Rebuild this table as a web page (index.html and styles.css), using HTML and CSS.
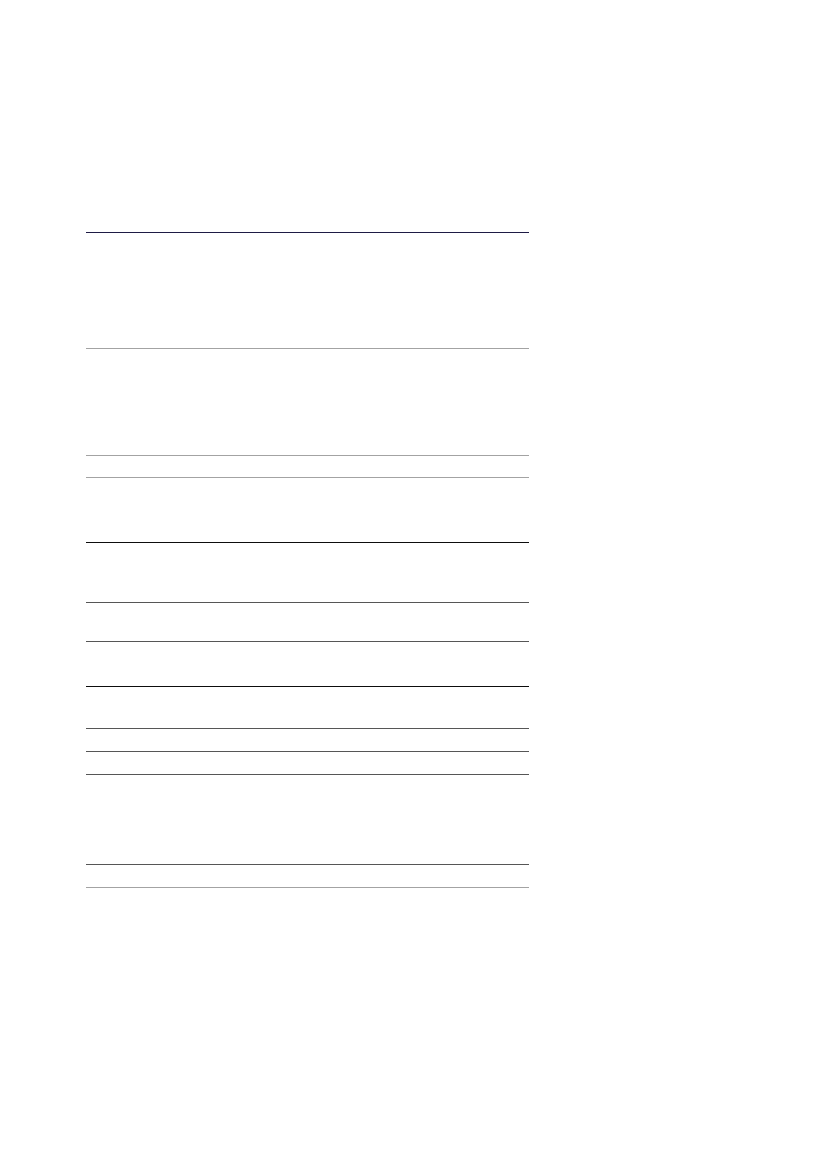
FILE: index.html
```html
<!DOCTYPE html>
<html lang="en">
<head>
<meta charset="utf-8">
<title>Table</title>
<link rel="stylesheet" href="styles.css">
</head>
<body>
<div class="sheet">
  <div class="row h1 light"></div>
  <div class="row h2 light"></div>
  <div class="row h3 light"></div>
  <div class="row h4 black"></div>
  <div class="row h5 dark"></div>
  <div class="row h6 dark"></div>
  <div class="row h7 black"></div>
  <div class="row h8 dark"></div>
  <div class="row h9 dark"></div>
  <div class="row h10 dark"></div>
  <div class="row h11 dark"></div>
  <div class="row h12 light"></div>
</div>
</body>
</html>
```
FILE: styles.css
```css
html, body {
  margin: 0;
  padding: 0;
  background: #ffffff;
  font-family: "Liberation Sans", Arial, sans-serif;
}
.sheet {
  width: 443px;
  margin: 232px 0 0 86px;
  border-top: 1px solid #1e1b45;
}
.row { border-bottom: 1px solid #555555; }
.light { border-bottom-color: #a3a3a3; }
.dark { border-bottom-color: #565656; }
.black { border-bottom-color: #0d0d0d; }
.h1 { height: 115px; }
.h2 { height: 106px; }
.h3 { height: 21px; }
.h4 { height: 64px; }
.h5 { height: 59px; }
.h6 { height: 38px; }
.h7 { height: 44px; }
.h8 { height: 41px; }
.h9 { height: 22px; }
.h10 { height: 22px; }
.h11 { height: 89px; }
.h12 { height: 22px; }
```
